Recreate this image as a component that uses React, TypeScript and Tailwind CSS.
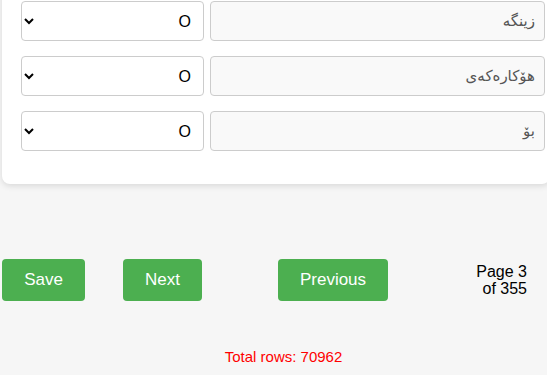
const rows = [
  { label: 'زینگە', value: 'O' },
  { label: 'هۆکارەکەی', value: 'O' },
  { label: 'بۆ', value: 'O' },
];

export default function App() {
  return (
    <div
      className="min-h-[375px] bg-[#f6f6f6] overflow-hidden"
      style={{ fontFamily: '"Liberation Sans", Arial, sans-serif' }}
    >
      <div className="ml-[2px] -mt-[20px] w-[548px] rounded-lg bg-white pt-[21px] pb-[33px] pl-[19px] pr-[3px] shadow-[0_2px_6px_rgba(0,0,0,0.12)]">
        <div className="flex flex-col gap-[15px]">
          {rows.map((r) => (
            <div key={r.label} className="flex gap-[6px]">
              <select
                dir="rtl"
                defaultValue={r.value}
                className="h-[40px] w-[183px] rounded-[4px] border border-[#ccc] bg-white px-[8px] text-[16px] text-black"
              >
                <option value="O">O</option>
              </select>
              <input
                dir="rtl"
                readOnly
                value={r.label}
                className="h-[40px] w-[335px] rounded-[4px] border border-[#ccc] bg-[#f9f9f9] px-[9px] text-[15px] text-[#555]"
                style={{ fontFamily: '"DejaVu Sans", "Noto Sans", sans-serif' }}
              />
            </div>
          ))}
        </div>
      </div>

      <div className="mt-[75px] flex items-center pl-[2px]">
        <button className="h-[42px] w-[83px] rounded-[4px] bg-[#4caf50] text-[17px] text-white">
          Save
        </button>
        <button className="ml-[38px] h-[42px] w-[79px] rounded-[4px] bg-[#4caf50] text-[17px] text-white">
          Next
        </button>
        <button className="ml-[76px] h-[42px] w-[110px] rounded-[4px] bg-[#4caf50] text-[17px] text-white">
          Previous
        </button>
        <div className="ml-auto mr-[20px] text-right text-[16px] leading-[17px] text-black">
          Page 3
          <br />
          of 355
        </div>
      </div>

      <div className="mt-[45px] pl-[20px] text-center text-[15px] text-[#ff0000]">
        Total rows: 70962
      </div>
    </div>
  );
}
